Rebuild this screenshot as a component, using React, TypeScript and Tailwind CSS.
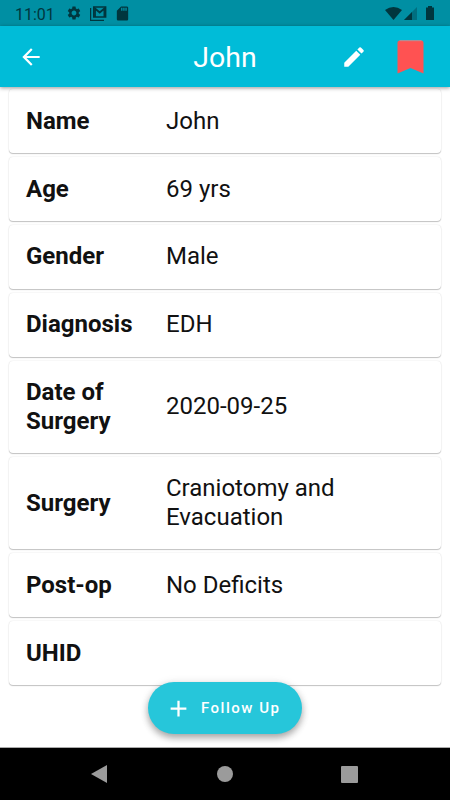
import { MdAdd, MdArrowBack, MdEdit, MdSdCard, MdSettings } from "react-icons/md"

interface PatientField {
  label: string
  value: string
}

const fields: PatientField[] = [
  { label: "Name", value: "John" },
  { label: "Age", value: "69 yrs" },
  { label: "Gender", value: "Male" },
  { label: "Diagnosis", value: "EDH" },
  { label: "Date of Surgery", value: "2020-09-25" },
  { label: "Surgery", value: "Craniotomy and Evacuation" },
  { label: "Post-op", value: "No Deficits" },
  { label: "UHID", value: "" },
]

function StatusBar() {
  return (
    <div className="flex h-[26px] shrink-0 items-center bg-[#008fa3] pl-[15px] pr-4 text-[#00363e]">
      <span className="w-[51px] pt-[3px] text-[16px] leading-none">11:01</span>
      <MdSettings className="h-4 w-4" />
      {/* Mail notification */}
      <svg className="ml-[8px] h-[15px] w-[17px]" viewBox="0 0 17 15" fill="none" stroke="currentColor">
        <path d="M.6 2v12.3H14" strokeWidth="1.2" />
        <path d="M3.7 11V1h12v10z" strokeWidth="1.4" />
        <path d="M5 11V2.5l4.7 4 4.7-4V11" strokeWidth="1.8" />
      </svg>
      <MdSdCard className="ml-[7px] h-[17px] w-[17px]" />
      <div className="ml-auto flex items-center">
        <svg className="h-[13px] w-[17px]" viewBox="0 0 17 13">
          <path d="M0 3Q8.5-3 17 3L8.5 13z" fill="currentColor" />
        </svg>
        <svg className="ml-[2px] h-[13px] w-[13px]" viewBox="0 0 13 13">
          <path d="M0 13L13 0v13z" fill="#006f80" />
          <path d="M0 13L8 5v8z" fill="currentColor" />
        </svg>
        <svg className="ml-[9px] h-[14px] w-[8px]" viewBox="0 0 8 14">
          <path d="M2 0h4v1.5h2V14H0V1.5h2z" fill="currentColor" />
        </svg>
      </div>
    </div>
  )
}

function AppBar({ title }: { title: string }) {
  return (
    <header className="relative z-10 grid h-[61px] shrink-0 grid-cols-[1fr_auto_1fr] items-center bg-[#00bcd8] pl-[18px] pr-[26px] text-white shadow-[0_1px_4px_rgba(0,0,0,0.4)]">
      <MdArrowBack className="h-[26px] w-[26px]" />
      <h1 className="pl-[8px] pt-[3px] text-[28.5px] leading-none">{title}</h1>
      <div className="flex items-center justify-end gap-[30px]">
        <MdEdit className="h-[26px] w-[26px]" />
        <svg className="h-[34px] w-[27px]" viewBox="0 0 27 34">
          <path d="M.5 33.5V3Q.5.5 3 .5H24Q26.5.5 26.5 3V33.5L13.5 28z" fill="#ff5252" />
          <path d="M2.5.7H24.5" stroke="#b89297" strokeWidth="1" />
        </svg>
      </div>
    </header>
  )
}

function FieldCard({ label, value }: PatientField) {
  return (
    <div className="flex items-center rounded-[4px] bg-white px-[17px] pb-[17.9px] pt-[17.7px] text-[24px] leading-[28.4px] text-[#111] shadow-[0_1px_1px_rgba(0,0,0,0.22),0_0_1.5px_rgba(0,0,0,0.15)]">
      <div className="w-[140px] shrink-0 pr-[24px] font-bold">
        {label}
      </div>
      <div className="w-[210px]">{value}</div>
    </div>
  )
}

function NavigationBar() {
  return (
    <nav className="grid h-[53px] shrink-0 grid-cols-3 items-center border-t border-[#aaa] bg-black pl-[37px] pr-[38px] text-[#9b9b9b]">
      <svg className="mr-[2px] h-[18px] w-4 justify-self-center" viewBox="0 0 16 18">
        <path d="M16 0v18L0 9z" fill="currentColor" />
      </svg>
      <div className="h-4 w-4 justify-self-center rounded-full bg-[#9b9b9b]" />
      <div className="h-[17px] w-[17px] justify-self-center rounded-[1px] bg-[#9b9b9b]" />
    </nav>
  )
}

export default function App() {
  return (
    <div className="relative flex h-[800px] w-[450px] flex-col overflow-hidden bg-white font-['Roboto','Noto_Sans',sans-serif]">
      <StatusBar />
      <AppBar title="John" />
      <main className="flex flex-1 flex-col gap-[3.9px] px-[9px] pt-[2px]">
        {fields.map((field) => (
          <FieldCard key={field.label} {...field} />
        ))}
      </main>
      <NavigationBar />

      {/* Floating action button */}
      <button className="absolute bottom-[66px] left-[148px] flex h-[52px] w-[154px] items-center rounded-full bg-[#26c6da] pl-[17px] text-[15px] font-medium tracking-[1.5px] text-white shadow-[0_4px_7px_rgba(0,0,0,0.3),0_1px_10px_rgba(0,0,0,0.1)]">
        <MdAdd className="mr-[9px] h-[27px] w-[27px]" />
        <span className="pt-px">Follow Up</span>
      </button>
    </div>
  )
}
